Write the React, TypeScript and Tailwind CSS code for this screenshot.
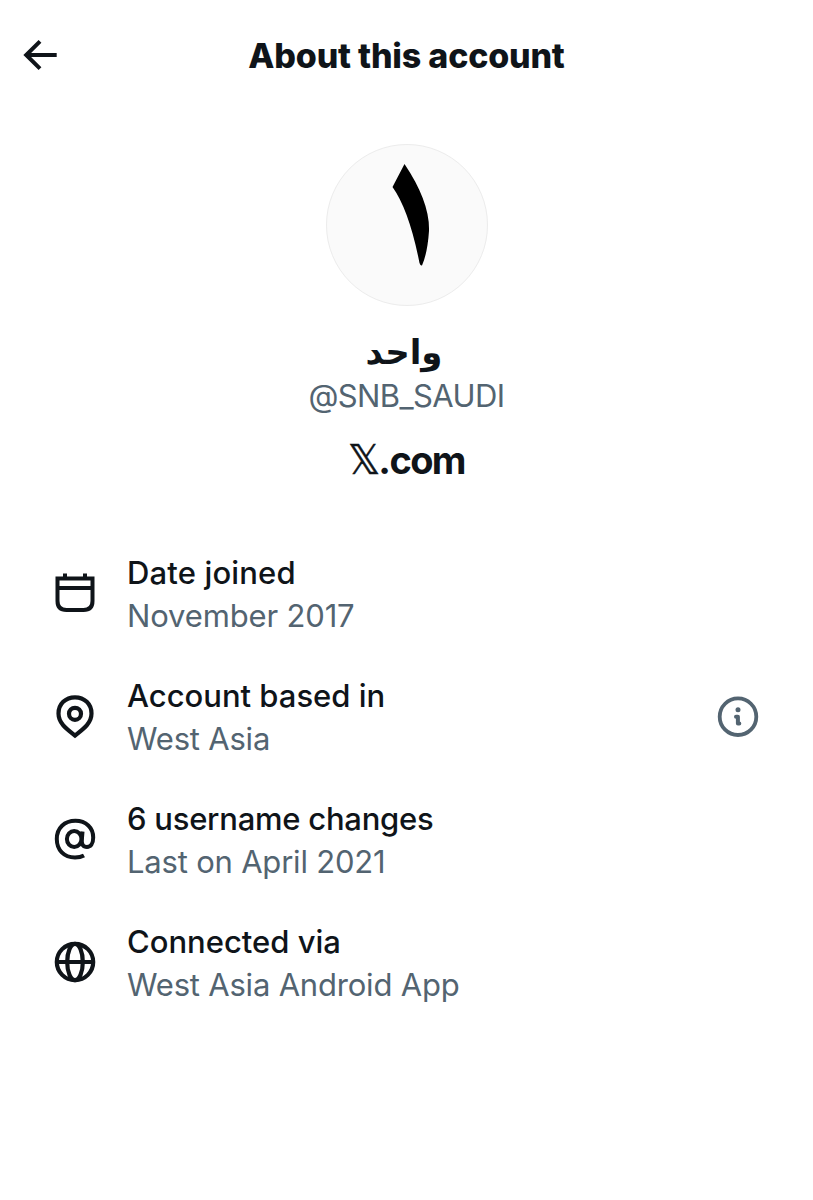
import React from 'react';

interface InfoRowProps {
  icon: React.ReactNode;
  title: string;
  value: string;
  titleClass: string;
  valueClass: string;
  action?: React.ReactNode;
}

const BackIcon = () => (
  <svg className="h-12 w-12" viewBox="0 0 48 48" fill="none" stroke="currentColor" strokeWidth="4">
    <path d="M40.7 23H11M24 9.3L10.200 23L24 36.7" />
  </svg>
);

const CalendarIcon = () => (
  <svg className="h-12 w-12" viewBox="0 0 48 48" fill="none" stroke="currentColor" strokeWidth="4">
    <path d="M6.5 8.5H41.5V31Q41.5 40 32.5 40H15.5Q6.5 40 6.5 31ZM6.5 18H41.5M14 3.5V9M34 3.5V9" />
  </svg>
);

const PinIcon = () => (
  <svg className="h-12 w-12" viewBox="0 0 48 48" fill="none" stroke="currentColor" strokeWidth="4.2">
    <path d="M24 42.500C15 35.5 7.5 30 7.5 20.500C7.5 11 14.5 4.300 24 4.300S40.5 11 40.5 20.500C40.5 30 33 35.5 24 42.500Z" />
    <circle cx="24" cy="20.800" r="6" />
  </svg>
);

const AtIcon = () => (
  <svg className="h-12 w-12" viewBox="0 0 48 48" fill="none" stroke="currentColor" strokeWidth="4">
    <path d="M33 39.5C30.3 41 27.5 41.5 24 41.5C13 41.5 5.8 34 5.8 23C5.8 12 13.5 4.8 24.5 4.8C35 4.8 42.2 11.8 42.2 21.5C42.2 28 39.5 31 36 31C32 31 30.5 28.2 30.8 24L31.5 15.5" />
    <ellipse cx="23.2" cy="23" rx="7.3" ry="8" />
  </svg>
);

const GlobeIcon = () => (
  <svg className="h-12 w-12" viewBox="0 0 48 48" fill="none" stroke="currentColor" strokeWidth="4.2">
    <circle cx="24" cy="23" r="18.2" />
    <ellipse cx="24" cy="23" rx="7.8" ry="18.2" />
    <path d="M5.5 23H42.5" />
  </svg>
);

const InfoIcon = () => (
  <svg className="h-12 w-12" viewBox="0 0 48 48" fill="none" stroke="currentColor">
    <circle cx="24" cy="23.7" r="18.3" strokeWidth="3.8" />
    <circle cx="24" cy="16.8" r="2.5" fill="currentColor" stroke="none" />
    <path d="M22 23.700H23.9V30.500H25.300" strokeWidth="4" strokeLinecap="round" strokeLinejoin="round" />
  </svg>
);

const InfoRow: React.FC<InfoRowProps> = ({ icon, title, value, titleClass, valueClass, action }) => {
  return (
    <li className="flex items-center">
      {icon}
      <div className="ml-[28px] flex-1 whitespace-nowrap text-[31px] leading-[43px]">
        <p className={`font-medium ${titleClass}`}>{title}</p>
        <p className={`text-[#536471] ${valueClass}`}>{value}</p>
      </div>
      {action}
    </li>
  );
};

const App: React.FC = () => {
  return (
    <div className="min-h-[1200px] bg-white font-['Inter',sans-serif] text-[#0f1419]">
      <header className="grid h-[111px] grid-cols-[96px_1fr_96px] items-center">
        <button type="button" aria-label="Back" className="ml-4 w-12">
          <BackIcon />
        </button>
        <h1 className="whitespace-nowrap text-center text-[34px] font-extrabold leading-[44px] tracking-[-0.2px]">
          About this account
        </h1>
      </header>

      <section className="flex flex-col items-center pt-[33px]">
        <div className="h-[162px] w-[162px] overflow-hidden rounded-full border border-[#ececec] bg-[#fafafa]">
          <svg className="h-[160px] w-[160px]" viewBox="0 0 160 160">
            <path d="M77.5 19Q103 57 102 86Q100.5 108 95 120.5Q93.500 121 92.500 118Q82 65 65.5 42Z" fill="#000" />
          </svg>
        </div>
        <h2 dir="rtl" className="mt-[24px] mr-[5px] font-['DejaVu_Sans',sans-serif] text-[34px] font-bold leading-[44px]">
          واحد
        </h2>
        <p className="text-[31px] leading-[44px] tracking-[-0.6px] text-[#536471]">@SNB_SAUDI</p>
        <p className="mt-[20px] flex text-[38px] font-bold leading-[44px]">
          <span className="mr-[-2px] font-['DejaVu_Sans',sans-serif] text-[40px] font-normal [-webkit-text-stroke:0.5px_#0f1419]">
            𝕏
          </span>
          <span className="tracking-[-1.6px]">.com</span>
        </p>
      </section>

      <ul className="mt-[69px] flex flex-col gap-[37px] pl-[51px] pr-[51px]">
        <InfoRow
          icon={<CalendarIcon />}
          title="Date joined"
          value="November 2017"
          titleClass="tracking-[0.15px]"
          valueClass="tracking-[-0.15px]"
        />
        <InfoRow
          icon={<PinIcon />}
          title="Account based in"
          value="West Asia"
          titleClass="tracking-[0px]"
          valueClass="tracking-[-0.2px]"
          action={
            <button type="button" aria-label="More info" className="text-[#536471]">
              <InfoIcon />
            </button>
          }
        />
        <InfoRow
          icon={<AtIcon />}
          title="6 username changes"
          value="Last on April 2021"
          titleClass="tracking-[-0.25px]"
          valueClass="tracking-[-0.2px]"
        />
        <InfoRow
          icon={<GlobeIcon />}
          title="Connected via"
          value="West Asia Android App"
          titleClass="tracking-[0px]"
          valueClass="tracking-[-0.2px]"
        />
      </ul>
    </div>
  );
};

export default App;
